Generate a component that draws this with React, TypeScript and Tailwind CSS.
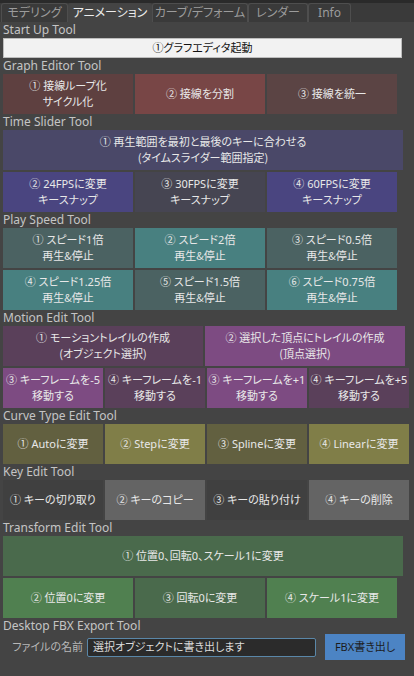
import React from "react";

const FONT = "font-['Noto_Sans','Noto_Sans_CJK_JP',sans-serif] [font-feature-settings:'palt'] [font-variant-east-asian:proportional-width]";

function Label({ children }: { children: React.ReactNode }) {
  return (
    <div className="h-[16px] text-[12px] leading-[16px] text-[#c4c4c4] whitespace-nowrap">
      {children}
    </div>
  );
}

function Btn({ cls, lines }: { cls: string; lines: string[] }) {
  return (
    <div
      className={`${cls} h-[40px] flex flex-col items-center justify-center text-[11px] leading-[16px] text-[#e8e8e8] whitespace-nowrap`}
    >
      {lines.map((l, i) => (
        <div key={i}>{l}</div>
      ))}
    </div>
  );
}

function Tab({ w, label, active }: { w: string; label: string; active?: boolean }) {
  return (
    <div
      className={`${w} h-[19px] flex items-center justify-center text-[12px] rounded-t-[3px] border border-b-0 ${
        active ? "bg-[#444444] border-[#444444] text-[#ececec]" : "bg-[#3a3a3a] border-[#4e4e4e] text-[#9c9c9c]"
      }`}
    >
      {label}
    </div>
  );
}

export default function App() {
  return (
    <div className={`${FONT} w-[414px] h-[676px] bg-[#444444] overflow-hidden`}>
      <div className="h-[3px] bg-[#2a2a2a]" />
      <div className="h-[19px] bg-[#3a3a3a] flex items-end pl-[1px]">
        <Tab w="w-[67px]" label="モデリング" />
        <Tab w="w-[84px]" label="アニメーション" active />
        <Tab w="w-[96px]" label="カーブ/デフォーム" />
        <Tab w="w-[60px]" label="レンダー" />
        <Tab w="w-[43px]" label="Info" />
      </div>

      <div className="px-[3px] flex flex-col">
        <Label>Start Up Tool</Label>
        <div className="w-[399px] h-[20px] bg-[#f2f2f2] border border-[#bdbdbd] flex items-center justify-center text-[11px] text-[#111111] whitespace-nowrap">
          ①グラフエディタ起動
        </div>

        <Label>Graph Editor Tool</Label>
        <div className="flex gap-[2px]">
          <Btn cls="w-[130px] bg-[#5e4040]" lines={["① 接線ループ化", "サイクル化"]} />
          <Btn cls="w-[130px] bg-[#784646]" lines={["② 接線を分割"]} />
          <Btn cls="w-[130px] bg-[#5b4444]" lines={["③ 接線を統一"]} />
        </div>

        <Label>Time Slider Tool</Label>
        <div className="flex flex-col gap-[2px]">
          <Btn
            cls="w-[400px] bg-[#4a4868]"
            lines={["① 再生範囲を最初と最後のキーに合わせる", "（タイムスライダー範囲指定）"]}
          />
          <div className="flex gap-[2px]">
            <Btn cls="w-[130px] bg-[#4a4580]" lines={["② 24FPSに変更", "キースナップ"]} />
            <Btn cls="w-[130px] bg-[#464552]" lines={["③ 30FPSに変更", "キースナップ"]} />
            <Btn cls="w-[130px] bg-[#4a4580]" lines={["④ 60FPSに変更", "キースナップ"]} />
          </div>
        </div>

        <Label>Play Speed Tool</Label>
        <div className="flex flex-col gap-[2px]">
          <div className="flex gap-[2px]">
            <Btn cls="w-[130px] bg-[#4b6262]" lines={["① スピード1倍", "再生＆停止"]} />
            <Btn cls="w-[130px] bg-[#488080]" lines={["② スピード2倍", "再生＆停止"]} />
            <Btn cls="w-[130px] bg-[#4b6262]" lines={["③ スピード0.5倍", "再生＆停止"]} />
          </div>
          <div className="flex gap-[2px]">
            <Btn cls="w-[130px] bg-[#488080]" lines={["④ スピード1.25倍", "再生＆停止"]} />
            <Btn cls="w-[130px] bg-[#4b6262]" lines={["⑤ スピード1.5倍", "再生＆停止"]} />
            <Btn cls="w-[130px] bg-[#488080]" lines={["⑥ スピード0.75倍", "再生＆停止"]} />
          </div>
        </div>

        <Label>Motion Edit Tool</Label>
        <div className="flex flex-col gap-[2px]">
          <div className="flex gap-[2px]">
            <Btn cls="w-[200px] bg-[#5a405a]" lines={["① モーショントレイルの作成", "（オブジェクト選択）"]} />
            <Btn cls="w-[200px] bg-[#7d4b82]" lines={["② 選択した頂点にトレイルの作成", "（頂点選択）"]} />
          </div>
          <div className="flex gap-[2px]">
            <Btn cls="w-[100px] bg-[#7d4b82]" lines={["③ キーフレームを-5", "移動する"]} />
            <Btn cls="w-[100px] bg-[#5a405a]" lines={["④ キーフレームを-1", "移動する"]} />
            <Btn cls="w-[100px] bg-[#7d4b82]" lines={["③ キーフレームを+1", "移動する"]} />
            <Btn cls="w-[100px] bg-[#5a405a]" lines={["④ キーフレームを+5", "移動する"]} />
          </div>
        </div>

        <Label>Curve Type Edit Tool</Label>
        <div className="flex gap-[2px]">
          <Btn cls="w-[100px] bg-[#626040]" lines={["① Autoに変更"]} />
          <Btn cls="w-[100px] bg-[#807e48]" lines={["② Stepに変更"]} />
          <Btn cls="w-[100px] bg-[#626040]" lines={["③ Splineに変更"]} />
          <Btn cls="w-[100px] bg-[#807e48]" lines={["④ Linearに変更"]} />
        </div>

        <Label>Key Edit Tool</Label>
        <div className="flex gap-[2px]">
          <Btn cls="w-[100px] bg-[#404040]" lines={["① キーの切り取り"]} />
          <Btn cls="w-[100px] bg-[#646464]" lines={["② キーのコピー"]} />
          <Btn cls="w-[100px] bg-[#404040]" lines={["③ キーの貼り付け"]} />
          <Btn cls="w-[100px] bg-[#646464]" lines={["④ キーの削除"]} />
        </div>

        <Label>Transform Edit Tool</Label>
        <div className="flex flex-col gap-[2px]">
          <Btn cls="w-[400px] bg-[#4a6a4c]" lines={["① 位置0、回転0、スケール1に変更"]} />
          <div className="flex gap-[2px]">
            <Btn cls="w-[130px] bg-[#508050]" lines={["② 位置0に変更"]} />
            <Btn cls="w-[130px] bg-[#4a6a4c]" lines={["③ 回転0に変更"]} />
            <Btn cls="w-[130px] bg-[#508050]" lines={["④ スケール1に変更"]} />
          </div>
        </div>

        <Label>Desktop FBX Export Tool</Label>
        <div className="h-[26px] flex items-center">
          <div className="w-[84px] pr-[4px] text-right text-[11px] text-[#b8b8b8] whitespace-nowrap">
            ファイルの名前
          </div>
          <div className="w-[229px] h-[19px] bg-[#2b2b2b] border border-[#5a87a8] rounded-[2px] flex items-center pl-[5px] text-[11px] text-[#dcdcdc] whitespace-nowrap">
            選択オブジェクトに書き出します
          </div>
          <div className="ml-[9px] w-[80px] h-[26px] bg-[#4c84c4] flex items-center justify-center text-[11px] text-[#1c1c1c] whitespace-nowrap">
            FBX書き出し
          </div>
        </div>
      </div>
    </div>
  );
}
